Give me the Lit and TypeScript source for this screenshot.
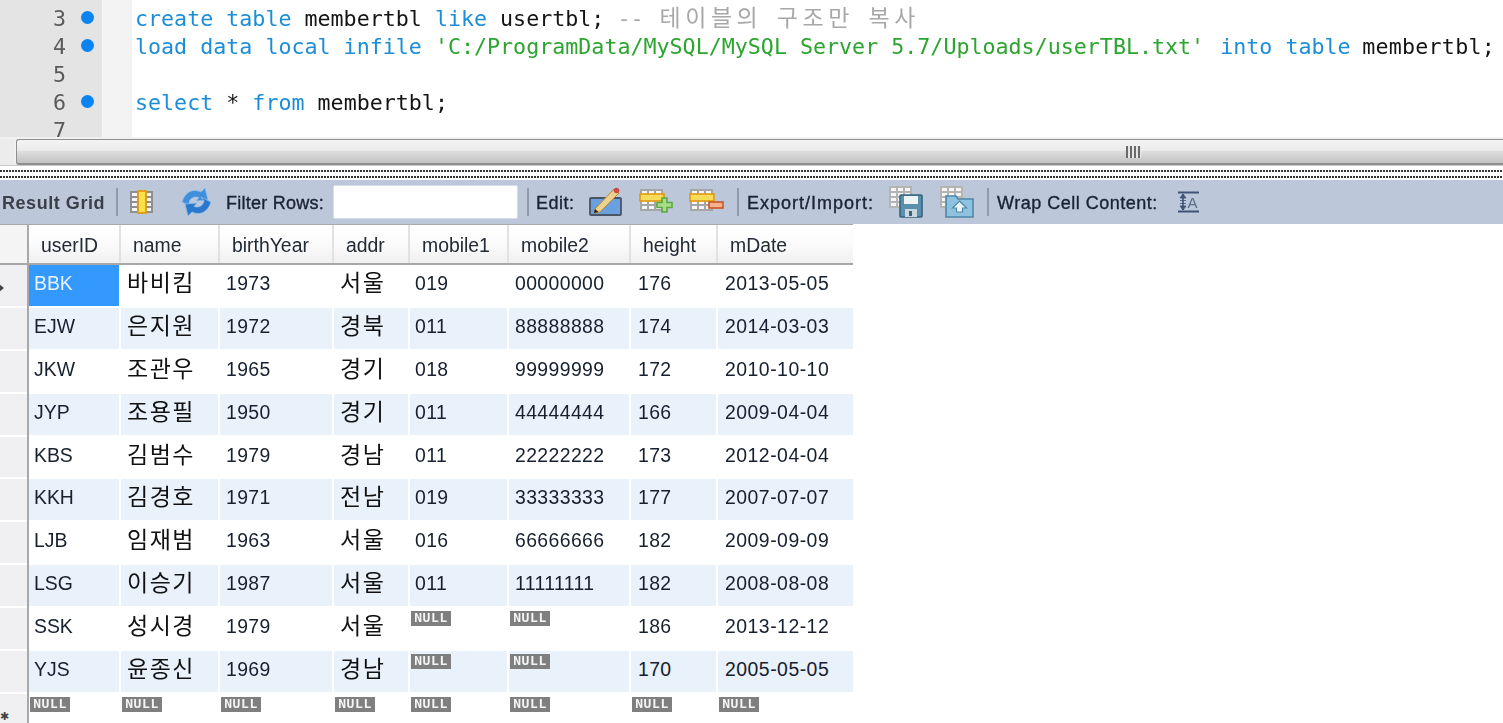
import { LitElement, html, css, svg } from "lit";
import { customElement } from "lit/decorators.js";

type Row = (string | null)[];
const ROWS: Row[] = [
  ["BBK", "바비킴", "1973", "서울", "019", "00000000", "176", "2013-05-05"],
  ["EJW", "은지원", "1972", "경북", "011", "88888888", "174", "2014-03-03"],
  ["JKW", "조관우", "1965", "경기", "018", "99999999", "172", "2010-10-10"],
  ["JYP", "조용필", "1950", "경기", "011", "44444444", "166", "2009-04-04"],
  ["KBS", "김범수", "1979", "경남", "011", "22222222", "173", "2012-04-04"],
  ["KKH", "김경호", "1971", "전남", "019", "33333333", "177", "2007-07-07"],
  ["LJB", "임재범", "1963", "서울", "016", "66666666", "182", "2009-09-09"],
  ["LSG", "이승기", "1987", "서울", "011", "11111111", "182", "2008-08-08"],
  ["SSK", "성시경", "1979", "서울", null, null, "186", "2013-12-12"],
  ["YJS", "윤종신", "1969", "경남", null, null, "170", "2005-05-05"],
];
const HEADERS = ["userID", "name", "birthYear", "addr", "mobile1", "mobile2", "height", "mDate"];

const miniGrid = (x: number, y: number, bg = "#a6a6a6") => svg`
  <rect x=${x} y=${y} width="23" height="22" fill=${bg}/>
  ${[0, 1, 2, 3].map((r) =>
    [0, 1, 2].map(
      (c) => svg`<rect x=${x + 2 + c * 7} y=${y + 2 + r * 5} width="5" height="3" fill="#f6f6f6"/>`
    )
  )}
`;
const yellowBar = svg`
  <rect x="0" y="6" width="24" height="7" fill="#f6dc58" stroke="#e09a12" stroke-width="1.6"/>
`;

const ICONS = {
  columns: svg`<svg width="24" height="24" viewBox="0 0 24 24">
    ${miniGrid(0, 1, "#8f8f8f")}
    <rect x="8" y="1" width="8" height="22" fill="#fbe04e" stroke="#e39a10" stroke-width="1.8"/>
  </svg>`,
  refresh: svg`<svg width="31" height="28" viewBox="0 0 31 28">
    <path d="M1 14 C4 4 12 0 20 4 L24 0 L27 12 L15 13 L18 9.5 C13 8 9 10 8 15 L11 19 Z" fill="#3f8fdc" stroke="#8fbce8" stroke-width=".8"/>
    <path d="M30 14 C27 24 19 28 11 24 L7 28 L4 16 L16 15 L13 18.5 C18 20 22 18 23 13 L20 9 Z" fill="#2a78cc" stroke="#8fbce8" stroke-width=".8"/>
  </svg>`,
  edit: svg`<svg width="33" height="30" viewBox="0 0 33 30">
    <rect x="1" y="11" width="31" height="17" rx="1" fill="#6a9fe0" stroke="#4b5563" stroke-width="1.8"/>
    <path d="M6 22 L25 2 L30 6 L11 25 L5 26 Z" fill="#eed08e" stroke="#b98a3a" stroke-width="1"/>
    <circle cx="27.5" cy="3.5" r="2.8" fill="#cf4a4a"/>
    <path d="M5 26 L6 22 L9.5 25 Z" fill="#222"/>
  </svg>`,
  add: svg`<svg width="33" height="28" viewBox="0 0 33 28">
    ${miniGrid(0, 1)}${yellowBar}
    <path d="M22 10 h5 v4.500 h5 v5 h-5 v4.500 h-5 v-4.500 h-5 v-5 h5 z" fill="#a7dc8c" stroke="#5da83f" stroke-width="1.6"/>
  </svg>`,
  del: svg`<svg width="33" height="28" viewBox="0 0 33 28">
    ${miniGrid(0, 1)}${yellowBar}
    <rect x="19" y="14" width="14" height="6" fill="#f5b08c" stroke="#c8552a" stroke-width="1.6"/>
  </svg>`,
  save: svg`<svg width="34" height="32" viewBox="0 0 34 32">
    ${miniGrid(0, 0, "#b4b4b4")}
    <rect x="11" y="9" width="22" height="22" rx="1" fill="#5a8fae" stroke="#36647f" stroke-width="1.6"/>
    <rect x="15" y="10" width="14" height="8" fill="#eef3f6"/>
    <rect x="16" y="23" width="12" height="8" fill="#c9d6de"/>
    <rect x="20" y="25" width="3" height="5" fill="#36647f"/>
  </svg>`,
  load: svg`<svg width="34" height="32" viewBox="0 0 34 32">
    ${miniGrid(0, 0, "#b4b4b4")}
    <path d="M6 10 h10 l2 3 h15 v18 h-27 z" fill="#8fc2de" stroke="#4d87a8" stroke-width="1.6"/>
    <path d="M19.500 15 l7 7 h-4 v4 h-6 v-4 h-4 z" fill="#eaf4fa" stroke="#4d87a8" stroke-width="1.2"/>
  </svg>`,
  wrap: svg`<svg width="22" height="22" viewBox="0 0 22 22">
    <path d="M0 1.500 h21 M0 20.500 h21" stroke="#3f5375" stroke-width="1.800"/>
    <path d="M5 3 v16" stroke="#3f5375" stroke-width="1.600"/>
    <path d="M5 3 l3 4 h-6 z M5 19 l3 -4 h-6 z M2 9.500 h6 M2 12.500 h6" fill="#3f5375" stroke="#3f5375" stroke-width=".8"/>
    <text x="9.500" y="17" font-family="Liberation Sans, sans-serif" font-size="15" fill="#5a6b88">A</text>
  </svg>`,
};

@customElement("app-root")
export class AppRoot extends LitElement {
  static styles = css`
    :host {
      display: block;
      width: 1503px;
      height: 723px;
      overflow: hidden;
      background: #fff;
      font-family: "Liberation Sans", Arial, sans-serif;
    }
    .page {
      filter: blur(0.45px);
      width: 1503px;
      height: 723px;
      overflow: hidden;
    }

    /* Editor */
    .editor {
      display: flex;
      height: 137px;
      overflow: hidden;
      font-family: "DejaVu Sans Mono", monospace;
      font-size: 21.67px;
      line-height: 28px;
    }
    .gutter {
      width: 102px;
      flex: none;
      background: #e4e4e4;
      padding-top: 5px;
      box-sizing: border-box;
      color: #5a5a5a;
    }
    .ln {
      display: flex;
      height: 28px;
    }
    .num {
      width: 66px;
      text-align: right;
    }
    .dot {
      width: 13px;
      height: 13px;
      margin: 6px 0 0 15px;
      border-radius: 50%;
      background: #0a84f0;
    }
    .margin {
      width: 30px;
      flex: none;
      background: #f3f3f3;
    }
    .code {
      flex: 1;
      min-width: 0;
      padding: 5px 0 0 3px;
      color: #141414;
    }
    .code div {
      height: 28px;
      line-height: 28px;
      white-space: pre;
    }
    .k { color: #1c8ed8; }
    .s { color: #2ba52f; }
    .c { color: #a8a8a8; }
    .ko {
      font-family: "Noto Sans CJK KR", sans-serif;
      font-size: 23px;
      letter-spacing: 4.5px;
      word-spacing: 5px;
      line-height: 0;
      margin-left: 3px;
    }
    .into { margin-left: 3px; }
    .tail { margin-left: -1.5px; letter-spacing: 0.25px; }

    /* Scrollbar */
    .hscroll {
      display: flex;
      height: 29px;
      background: #f1f1f1;
      padding-top: 2px;
      box-sizing: border-box;
      gap: 2px;
      border-bottom: 1px solid #c8c8c8;
    }
    .hscroll .corner {
      width: 14px;
      flex: none;
      background: #ececec;
    }
    .thumb {
      flex: 1;
      display: flex;
      align-items: center;
      justify-content: flex-end;
      padding-right: 362px;
      border: 1px solid #8f8f8f;
      border-bottom-width: 2px;
      border-right: none;
      border-radius: 3px 0 0 3px;
      background: linear-gradient(#f3f3f3 0%, #ebebeb 45%, #dedede 50%, #c2c2c2 100%);
    }
    .grip {
      width: 15px;
      height: 12px;
      background: repeating-linear-gradient(90deg, #6a6a6a 0 2px, #e6e6e6 2px 4px);
    }

    /* Dotted splitter */
    .split {
      height: 14px;
      background: #fff;
      display: flex;
      flex-direction: column;
    }
    .split i {
      display: block;
      height: 2px;
      margin-top: 4px;
      background: repeating-linear-gradient(90deg, #333 0 2px, #fff 2px 3px);
    }

    /* Toolbar */
    .toolbar {
      display: grid;
      grid-template-columns: 114px 14px 51px 45px 107px 194px 9px 53px 51px 50px 47px 10px 142px 51px 47px 10px 181px 1fr;
      align-items: center;
      height: 44px;
      padding-left: 2px;
      background: #bcc8da;
      font-size: 18px;
      color: #1a2238;
      -webkit-text-stroke: 0.35px #1a2238;
      white-space: nowrap;
    }
    .toolbar .label { padding-top: 2px; }
    .toolbar .title {
      font-weight: 700;
      color: #3a3f48;
      -webkit-text-stroke: 0;
      letter-spacing: 0.55px;
    }
    .toolbar .filter-label { letter-spacing: 0.25px; }
    .toolbar .edit-label { letter-spacing: 0.5px; }
    .toolbar .export-label { letter-spacing: 1px; }
    .toolbar .wrap-label { letter-spacing: 0.5px; }
    .sep {
      width: 2px;
      height: 28px;
      background: #8f9bad;
    }
    .toolbar svg { display: block; overflow: visible; }
    .filter {
      width: 185px;
      height: 34px;
      background: #fff;
      border-radius: 2px;
      box-sizing: border-box;
      border: 1px solid #d5dde8;
    }

    /* Result table */
    .table {
      width: 853px;
      font-size: 19.4px;
      color: #16202e;
    }
    .row {
      display: flex;
      height: 42.9px;
    }
    .row.head {
      height: 38px;
      border-top: 1px solid #a9a9a9;
      border-bottom: 2px solid #a8a8a8;
    }
    .rowhead {
      position: relative;
      width: 27px;
      flex: none;
      box-sizing: border-box;
      background: #f0f0f2;
      border-bottom: 2px solid #fff;
    }
    .rail {
      width: 2px;
      flex: none;
      background: #a8a8a8;
    }
    .head .rowhead {
      background: #f4f4f4;
      border-bottom: none;
    }
    .arrow {
      position: absolute;
      left: -2px;
      top: 18px;
      border-left: 6px solid #444;
      border-top: 5px solid transparent;
      border-bottom: 5px solid transparent;
    }
    .star {
      position: absolute;
      left: 0;
      top: 17px;
      color: #444;
      font-size: 11px;
      line-height: 11px;
    }
    .cells {
      display: grid;
      grid-template-columns: 90px 97px 112px 74px 97px 120px 85px 135px;
      column-gap: 2px;
    }
    .head .cells { background: #e2e2e2; }
    .hcell {
      padding-left: 12px;
      height: 38px;
      line-height: 40px;
      overflow: hidden;
      background: linear-gradient(#fff 0%, #fbfbfb 50%, #f0f0f0 100%);
      color: #222a36;
    }
    .cell {
      height: 41px;
      padding-left: 6px;
      line-height: 36px;
      box-sizing: border-box;
      white-space: nowrap;
      letter-spacing: 0.4px;
    }
    .cell:first-child { padding-left: 5px; letter-spacing: 0; }
    .cell:nth-child(5) { padding-left: 5px; }
    .cell:nth-child(7) { padding-left: 7px; }
    .cell:nth-child(8) { padding-left: 7px; letter-spacing: 0.5px; }
    .alt .cell { background: #e9f1fb; }
    .sel {
      background: #3399ff !important;
      color: #e8f3ff;
    }
    .kr {
      font-family: "Noto Sans CJK KR", sans-serif;
      font-size: 23px;
      letter-spacing: 1.5px;
      color: #111;
      line-height: 33px;
    }
    .cell.nul {
      padding: 3px 0 0 1px;
      line-height: 0;
    }
    .null {
      display: block;
      width: 40px;
      height: 15px;
      background: #7f7f7f;
      color: #f4f4f4;
      font-family: "DejaVu Sans Mono", monospace;
      font-weight: 700;
      font-size: 13px;
      letter-spacing: 0.6px;
      line-height: 14px;
      text-align: center;
      overflow: hidden;
    }
  `;

  private cell(value: string | null, col: number, rowIdx: number) {
    if (value === null) {
      return html`<div class="cell nul"><span class="null">NULL</span></div>`;
    }
    const kr = col === 1 || col === 3;
    const sel = rowIdx === 0 && col === 0;
    return html`<div class="cell ${kr ? "kr" : ""} ${sel ? "sel" : ""}">${value}</div>`;
  }

  render() {
    const gutter = [
      { n: "3", dot: true },
      { n: "4", dot: true },
      { n: "5", dot: false },
      { n: "6", dot: true },
      { n: "7", dot: false },
    ];
    return html`
      <div class="page">
        <div class="editor">
          <div class="gutter">
            ${gutter.map(
              (g) => html`<div class="ln"><span class="num">${g.n}</span>${g.dot ? html`<span class="dot"></span>` : ""}</div>`
            )}
          </div>
          <div class="margin"></div>
          <div class="code">
            <div><span class="k">create table</span> membertbl <span class="k">like</span> usertbl; <span class="c">-- <span class="ko">테이블의 구조만 복사</span></span></div>
            <div><span class="k">load data local infile</span> <span class="s">'C:/ProgramData/MySQL/MySQL Server 5.7/Uploads/userTBL.txt'</span> <span class="k into">into table</span> <span class="tail">membertbl;</span></div>
            <div></div>
            <div><span class="k">select</span> * <span class="k">from</span> membertbl;</div>
          </div>
        </div>

        <div class="hscroll">
          <div class="corner"></div>
          <div class="thumb"><span class="grip"></span></div>
        </div>

        <div class="split"><i></i><i></i></div>

        <div class="toolbar">
          <span class="label title">Result Grid</span>
          <span class="sep"></span>
          <span>${ICONS.columns}</span>
          <span>${ICONS.refresh}</span>
          <span class="label filter-label">Filter Rows:</span>
          <span class="filter"></span>
          <span class="sep"></span>
          <span class="label edit-label">Edit:</span>
          <span>${ICONS.edit}</span>
          <span>${ICONS.add}</span>
          <span>${ICONS.del}</span>
          <span class="sep"></span>
          <span class="label export-label">Export/Import:</span>
          <span>${ICONS.save}</span>
          <span>${ICONS.load}</span>
          <span class="sep"></span>
          <span class="label wrap-label">Wrap Cell Content:</span>
          <span>${ICONS.wrap}</span>
        </div>

        <div class="table">
          <div class="row head">
            <div class="rowhead"></div>
            <div class="rail"></div>
            <div class="cells">${HEADERS.map((h) => html`<div class="hcell">${h}</div>`)}</div>
          </div>
          ${ROWS.map(
            (r, i) => html`
              <div class="row ${i % 2 === 1 ? "alt" : ""}">
                <div class="rowhead">${i === 0 ? html`<span class="arrow"></span>` : ""}</div>
                <div class="rail"></div>
                <div class="cells">${r.map((v, c) => this.cell(v, c, i))}</div>
              </div>
            `
          )}
          <div class="row">
            <div class="rowhead"><span class="star">✱</span></div>
            <div class="rail"></div>
            <div class="cells">${HEADERS.map(() => html`<div class="cell nul"><span class="null">NULL</span></div>`)}</div>
          </div>
        </div>
      </div>
    `;
  }
}
